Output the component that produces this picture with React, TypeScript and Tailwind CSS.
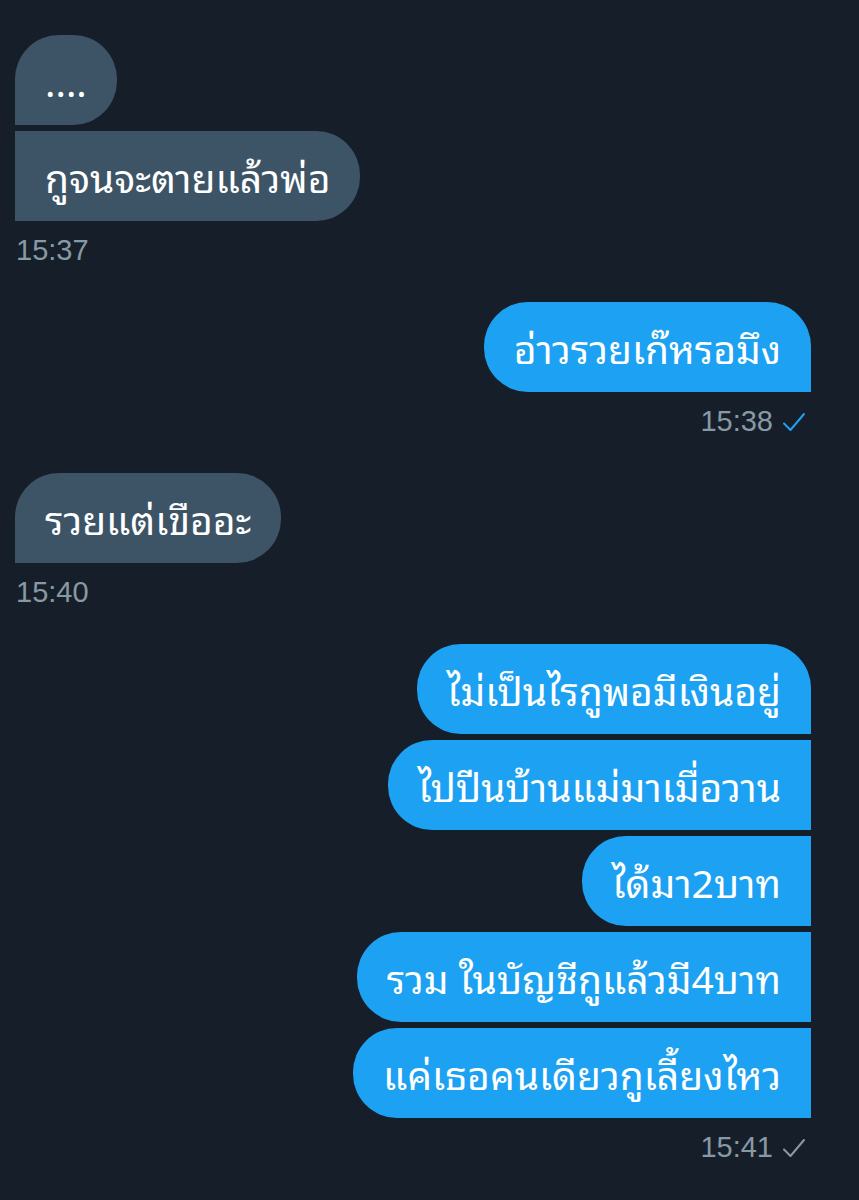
import React from "react";

type Corner = "tl" | "tr" | "bl" | "br";

interface Msg {
  text: string;
  square: Corner[];
}

interface Group {
  side: "in" | "out";
  time: string;
  read?: boolean;
  msgs: Msg[];
}

const groups: Group[] = [
  {
    side: "in",
    time: "15:37",
    msgs: [
      { text: "....", square: ["bl"] },
      { text: "กูจนจะตายแล้วพ่อ", square: ["tl", "bl"] },
    ],
  },
  {
    side: "out",
    time: "15:38",
    read: true,
    msgs: [{ text: "อ่าวรวยเก๊หรอมึง", square: ["br"] }],
  },
  {
    side: "in",
    time: "15:40",
    msgs: [{ text: "รวยแต่เขืออะ", square: ["bl"] }],
  },
  {
    side: "out",
    time: "15:41",
    msgs: [
      { text: "ไม่เป็นไรกูพอมีเงินอยู่", square: ["br"] },
      { text: "ไปปีนบ้านแม่มาเมื่อวาน", square: ["tr", "br"] },
      { text: "ได้มา2บาท", square: ["tr", "br"] },
      { text: "รวม ในบัญชีกูแล้วมี4บาท", square: ["tr", "br"] },
      { text: "แค่เธอคนเดียวกูเลี้ยงไหว", square: ["tr", "br"] },
    ],
  },
];

const cornerClass: Record<Corner, string> = {
  tl: "rounded-tl-none",
  tr: "rounded-tr-none",
  bl: "rounded-bl-none",
  br: "rounded-br-none",
};

const Check = ({ color }: { color: string }) => (
  <svg width="24" height="22" viewBox="0 0 24 22" fill="none" className="ml-[9px]">
    <path d="M2 12.5 L8.5 19 L22 3" stroke={color} strokeWidth="2" strokeLinecap="round" strokeLinejoin="round" />
  </svg>
);

const Bubble = ({ msg, side }: { msg: Msg; side: "in" | "out" }) => (
  <div
    className={[
      "h-[90px] flex items-center px-[30px] rounded-[44px] text-white text-[39px] whitespace-nowrap",
      side === "in" ? "bg-[#3d5466]" : "bg-[#1da1f2]",
      ...msg.square.map((c) => cornerClass[c]),
    ].join(" ")}
  >
    {msg.text}
  </div>
);

export default function App() {
  return (
    <div
      className="min-h-[1200px] w-full bg-[#161f29] pt-[35px] pl-[15px] pr-[48px]"
      style={{ fontFamily: '"Noto Sans Thai Looped", "Noto Sans Thai", "Noto Sans", "Liberation Sans", sans-serif' }}
    >
      {groups.map((g, i) => (
        <div key={i} className={"flex flex-col mb-[33px] " + (g.side === "in" ? "items-start" : "items-end")}>
          <div className={"flex flex-col gap-[6px] " + (g.side === "in" ? "items-start" : "items-end")}>
            {g.msgs.map((m, j) => (
              <Bubble key={j} msg={m} side={g.side} />
            ))}
          </div>
          <div
            className={
              "mt-[12px] h-[36px] flex items-center text-[29px] text-[#8899a6] " +
              (g.side === "in" ? "pl-[1px]" : "mr-[5px]")
            }
            style={{ fontFamily: '"Liberation Sans", Arial, sans-serif' }}
          >
            <span>{g.time}</span>
            {g.side === "out" && <Check color={g.read ? "#1da1f2" : "#8899a6"} />}
          </div>
        </div>
      ))}
    </div>
  );
}
